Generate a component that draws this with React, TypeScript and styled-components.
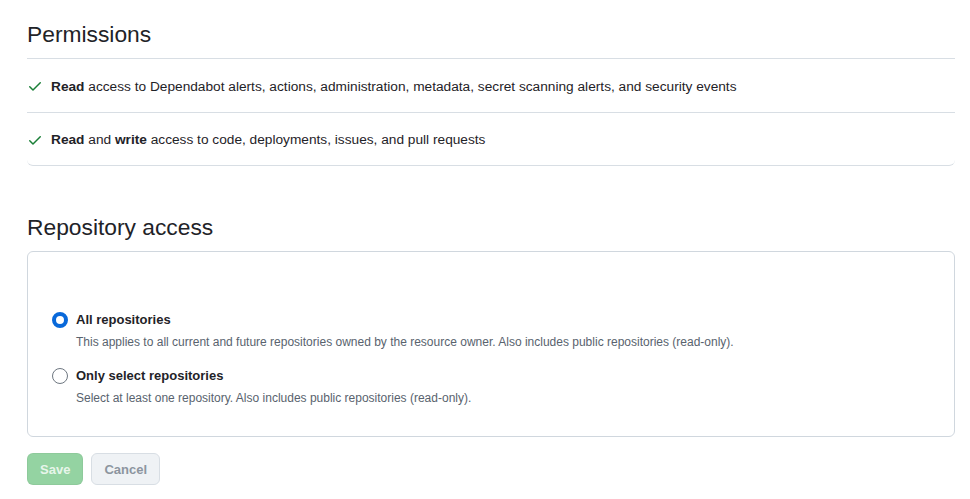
import { createGlobalStyle, styled } from "styled-components";

const GlobalStyle = createGlobalStyle`
  body {
    margin: 0;
    background: #ffffff;
    font-family: "Liberation Sans", "Noto Sans", sans-serif;
    color: #1f2328;
  }
`;

const Page = styled.div`
  padding: 19px 15px 0 27px;
  display: flex;
  flex-direction: column;
`;

const Heading = styled.h2`
  margin: 0;
  font-size: 22.8px;
  font-weight: 400;
  line-height: 30px;
  padding-bottom: 9px;
  color: #1f2328;
`;

const PermissionList = styled.ul`
  list-style: none;
  margin: 0 0 46px;
  padding: 0;
  border-top: 1px solid #d8dee4;
  border-bottom: 1px solid #d8dee4;
  border-radius: 0 0 6px 6px;
`;

const PermissionRow = styled.li`
  display: flex;
  align-items: center;
  gap: 8px;
  height: 53px;
  padding-top: 1px;
  box-sizing: border-box;
  font-size: 13.7px;
  & + & {
    border-top: 1px solid #d8dee4;
  }
  b {
    font-weight: 600;
  }
`;

const AccessBox = styled.div`
  border: 1px solid #d0d7de;
  border-radius: 6px;
  padding: 58px 24px 29px;
  display: flex;
  flex-direction: column;
  gap: 15px;
`;

const Option = styled.label`
  display: grid;
  grid-template-columns: 16px 1fr;
  column-gap: 8px;
  row-gap: 3px;
  align-items: center;
`;

const Radio = styled.span<{ $checked?: boolean }>`
  width: 16px;
  height: 16px;
  box-sizing: border-box;
  border-radius: 50%;
  background: #ffffff;
  border: ${(p) => (p.$checked ? "4px solid #0969da" : "1px solid #6e7781")};
`;

const OptionLabel = styled.span`
  font-size: 13px;
  font-weight: 700;
  line-height: 20px;
`;

const OptionNote = styled.span`
  grid-column: 2;
  font-size: 12px;
  line-height: 18px;
  color: #59636e;
`;

const Actions = styled.div`
  display: flex;
  gap: 8px;
  margin-top: 16px;
`;

const Button = styled.button<{ $primary?: boolean }>`
  height: 32px;
  padding: 0 12px;
  font-family: inherit;
  font-size: 13px;
  font-weight: 700;
  border-radius: 6px;
  border: 1px solid ${(p) => (p.$primary ? "rgba(31,35,40,0.05)" : "#d8dee4")};
  background: ${(p) => (p.$primary ? "#94d3a2" : "#eff2f5")};
  color: ${(p) => (p.$primary ? "#ffffffcc" : "#8c959f")};
  cursor: not-allowed;
`;

const Check = () => (
  <svg width="16" height="16" viewBox="0 0 16 16" fill="#1a7f37">
    <path d="M13.78 4.22a.75.75 0 0 1 0 1.06l-7.25 7.25a.75.75 0 0 1-1.06 0L2.22 9.28a.751.751 0 0 1 .018-1.042.751.751 0 0 1 1.042-.018L6 10.94l6.72-6.72a.75.75 0 0 1 1.06 0Z" />
  </svg>
);

const App = () => {
  return (
    <Page>
      <GlobalStyle />
      <Heading>Permissions</Heading>
      <PermissionList>
        <PermissionRow>
          <Check />
          <span>
            <b>Read</b> access to Dependabot alerts, actions, administration, metadata, secret scanning
            alerts, and security events
          </span>
        </PermissionRow>
        <PermissionRow>
          <Check />
          <span>
            <b>Read</b> and <b>write</b> access to code, deployments, issues, and pull requests
          </span>
        </PermissionRow>
      </PermissionList>

      <Heading>Repository access</Heading>
      <AccessBox>
        <Option>
          <Radio $checked />
          <OptionLabel>All repositories</OptionLabel>
          <OptionNote>
            This applies to all current and future repositories owned by the resource owner. Also includes
            public repositories (read-only).
          </OptionNote>
        </Option>
        <Option>
          <Radio />
          <OptionLabel>Only select repositories</OptionLabel>
          <OptionNote>Select at least one repository. Also includes public repositories (read-only).</OptionNote>
        </Option>
      </AccessBox>

      <Actions>
        <Button $primary disabled>
          Save
        </Button>
        <Button disabled>Cancel</Button>
      </Actions>
    </Page>
  );
};

export default App;
